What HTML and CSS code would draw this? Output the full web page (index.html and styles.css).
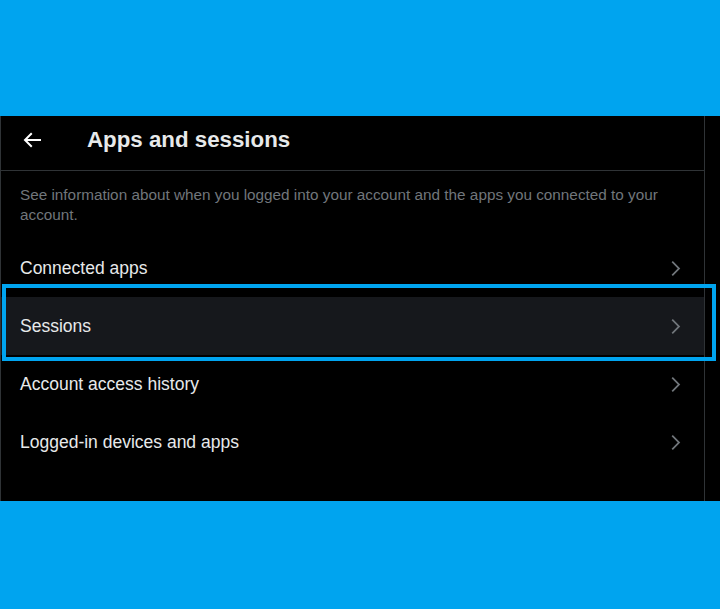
FILE: index.html
```html
<!DOCTYPE html>
<html lang="en">
<head>
<meta charset="utf-8">
<title>Apps and sessions</title>
<link rel="stylesheet" href="styles.css">
</head>
<body>
  <div class="band"></div>
  <main class="stage">
    <section class="panel">
      <header class="header">
        <span class="back">
          <svg viewBox="0 0 24 24" width="24" height="24"><path fill="currentColor" d="M7.414 13l5.043 5.04-1.414 1.42L3.586 12l7.457-7.46 1.414 1.42L7.414 11H21v2H7.414z"/></svg>
        </span>
        <h1 class="title">Apps and sessions</h1>
      </header>
      <p class="desc">See information about when you logged into your account and the apps you connected to your account.</p>
      <ul class="list">
        <li class="row"><span>Connected apps</span><svg class="chev" viewBox="0 0 24 24"><path fill="currentColor" d="M14.586 12L7.543 4.96l1.414-1.42L17.414 12l-8.457 8.46-1.414-1.42L14.586 12z"/></svg></li>
        <li class="row active"><span>Sessions</span><svg class="chev" viewBox="0 0 24 24"><path fill="currentColor" d="M14.586 12L7.543 4.96l1.414-1.42L17.414 12l-8.457 8.46-1.414-1.42L14.586 12z"/></svg><span class="ring"></span></li>
        <li class="row"><span>Account access history</span><svg class="chev" viewBox="0 0 24 24"><path fill="currentColor" d="M14.586 12L7.543 4.96l1.414-1.42L17.414 12l-8.457 8.46-1.414-1.42L14.586 12z"/></svg></li>
        <li class="row"><span>Logged-in devices and apps</span><svg class="chev" viewBox="0 0 24 24"><path fill="currentColor" d="M14.586 12L7.543 4.96l1.414-1.42L17.414 12l-8.457 8.46-1.414-1.42L14.586 12z"/></svg></li>
      </ul>
    </section>
  </main>
  <div class="band bottom"></div>
</body>
</html>
```
FILE: styles.css
```css
* { box-sizing: border-box; }
html, body {
  margin: 0;
  padding: 0;
  background: #00a4ef;
  font-family: "Liberation Sans", Arial, sans-serif;
  color: #e7e9ea;
}
.band { height: 116px; background: #00a4ef; }
.band.bottom { height: 108px; }
.stage {
  height: 385px;
  background: #000;
}
.panel {
  width: 705px;
  height: 100%;
  border-left: 1px solid #2f3336;
  border-right: 1px solid #2f3336;
}
.header {
  height: 55px;
  display: flex;
  align-items: center;
  border-bottom: 1px solid #2f3336;
  padding: 0 0 6px 19px;
}
.back {
  width: 24px;
  height: 24px;
  display: flex;
  color: #fff;
  margin-right: 43px;
}
.title {
  margin: 0;
  font-size: 22.3px;
  font-weight: 700;
  line-height: 28px;
  color: #e7e9ea;
}
.desc {
  margin: 0;
  padding: 14px 30px 14px 19px;
  font-size: 15.3px;
  line-height: 20px;
  color: #71767b;
}
.list {
  list-style: none;
  margin: 0;
  padding: 0;
}
.row {
  position: relative;
  height: 58px;
  display: flex;
  align-items: center;
  justify-content: space-between;
  padding: 0 18px 0 19px;
  font-size: 17.5px;
  color: #e7e9ea;
}
.row.active { background: #16181c; }
.chev {
  width: 21px;
  height: 21px;
  color: #71767b;
}
.ring {
  position: absolute;
  left: 1px;
  top: -13px;
  width: 714px;
  height: 77px;
  border: 4px solid #00a4ef;
  pointer-events: none;
}
```
